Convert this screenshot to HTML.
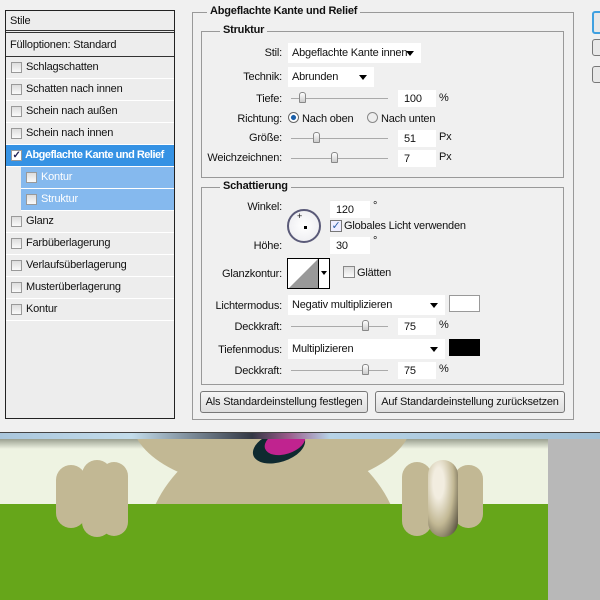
<!DOCTYPE html>
<html><head><meta charset="utf-8">
<style>
*{margin:0;padding:0;box-sizing:border-box}
body{width:600px;height:600px;overflow:hidden;background:#f0f0f0;font-family:"Liberation Sans",sans-serif;font-size:11px;letter-spacing:-0.2px;color:#111;position:relative}
.a{position:absolute;white-space:nowrap}
.list{left:5px;top:10px;width:170px;height:409px;border:1px solid #222;background:#ededed;overflow:hidden}
.row{position:absolute;left:0;width:168px;height:22px;line-height:21px;border-bottom:1px solid #fff;padding-left:20px}
.cb{position:absolute;width:11px;height:11px;border:1px solid #999;background:linear-gradient(#ddd,#fafafa);top:5px;left:5px}
.sel{background:#3592e4;color:#fff;font-weight:bold;letter-spacing:-0.5px;padding-left:19px}
.sub{background:#85b9ee;color:#fff;left:15px;width:153px}
.box{position:absolute;border:1px solid #999;}
.lbl{position:absolute;background:#f0f0f0;font-weight:bold;padding:0 3px;top:-8px}
.inp{position:absolute;background:#fff;height:17px;line-height:18px;padding-left:6px}
.dd{position:absolute;background:#fff;height:20px;line-height:20px;padding-left:4px;overflow:hidden}
.dd:after{content:"";position:absolute;right:7px;top:8px;border:4px solid transparent;border-top:5px solid #000}
.sl{position:absolute;height:1px;background:#aaa}
.th{position:absolute;width:7px;height:11px;border:1px solid #888;border-radius:3px 3px 1px 1px;background:linear-gradient(#fff,#ccc);top:-6px}
.r{text-align:right}
.btn{position:absolute;height:22px;border:1px solid #777;border-radius:3px;background:linear-gradient(#f6f6f6,#ddd);text-align:center;line-height:20px}
.cv{position:absolute;left:0;top:432px;width:600px;height:168px;overflow:hidden;background:#eef3e2}
.cv div{position:absolute}
</style></head><body>
<div class="a list">
 <div class="row" style="top:0;padding-left:4px;height:22px;border-bottom:3px double #333">Stile</div>
 <div class="row" style="top:24px;padding-left:4px;border-bottom:1px solid #333">Fülloptionen: Standard</div>
 <div class="row" style="top:46px"><span class="cb"></span>Schlagschatten</div>
 <div class="row" style="top:68px"><span class="cb"></span>Schatten nach innen</div>
 <div class="row" style="top:90px"><span class="cb"></span>Schein nach außen</div>
 <div class="row" style="top:112px"><span class="cb"></span>Schein nach innen</div>
 <div class="row sel" style="top:134px"><span class="cb" style="background:#fff;font-size:10px;line-height:9px;color:#225;text-align:center">✓</span>Abgeflachte Kante und Relief</div>
 <div class="row sub" style="top:156px"><span class="cb"></span>Kontur</div>
 <div class="row sub" style="top:178px"><span class="cb"></span>Struktur</div>
 <div class="row" style="top:200px"><span class="cb"></span>Glanz</div>
 <div class="row" style="top:222px"><span class="cb"></span>Farbüberlagerung</div>
 <div class="row" style="top:244px"><span class="cb"></span>Verlaufsüberlagerung</div>
 <div class="row" style="top:266px"><span class="cb"></span>Musterüberlagerung</div>
 <div class="row" style="top:288px"><span class="cb"></span>Kontur</div>
</div>

<div class="box" style="left:192px;top:12px;width:382px;height:408px"><span class="lbl" style="left:14px">Abgeflachte Kante und Relief</span></div>
<div class="box" style="left:201px;top:31px;width:363px;height:147px"><span class="lbl" style="left:18px">Struktur</span></div>
<div class="box" style="left:201px;top:187px;width:363px;height:198px"><span class="lbl" style="left:18px">Schattierung</span></div>

<div class="a r" style="left:200px;width:82px;top:47px">Stil:</div>
<div class="dd" style="left:288px;top:43px;width:133px">Abgeflachte Kante innen</div>
<div class="a r" style="left:200px;width:82px;top:71px">Technik:</div>
<div class="dd" style="left:288px;top:67px;width:86px">Abrunden</div>
<div class="a r" style="left:200px;width:82px;top:93px">Tiefe:</div>
<div class="sl" style="left:291px;top:98px;width:97px"><div class="th" style="left:8px"></div></div>
<div class="inp" style="left:398px;top:90px;width:38px">100</div><div class="a" style="left:439px;top:92px">%</div>
<div class="a r" style="left:200px;width:82px;top:113px">Richtung:</div>
<div class="a" style="left:288px;top:112px;width:11px;height:11px;border-radius:50%;border:1px solid #666;background:radial-gradient(#1a5ea8 35%,#fff 45%)"></div>
<div class="a" style="left:302px;top:113px">Nach oben</div>
<div class="a" style="left:367px;top:112px;width:11px;height:11px;border-radius:50%;border:1px solid #888;background:#eee"></div>
<div class="a" style="left:381px;top:113px">Nach unten</div>
<div class="a r" style="left:200px;width:82px;top:132px">Größe:</div>
<div class="sl" style="left:291px;top:138px;width:97px"><div class="th" style="left:22px"></div></div>
<div class="inp" style="left:398px;top:130px;width:38px">51</div><div class="a" style="left:439px;top:131px">Px</div>
<div class="a r" style="left:200px;width:82px;top:152px">Weichzeichnen:</div>
<div class="sl" style="left:291px;top:158px;width:97px"><div class="th" style="left:40px"></div></div>
<div class="inp" style="left:398px;top:150px;width:38px">7</div><div class="a" style="left:439px;top:151px">Px</div>

<div class="a r" style="left:200px;width:82px;top:201px">Winkel:</div>
<div class="a" style="left:287px;top:209px;width:34px;height:34px;border-radius:50%;border:2px solid #5a5a78;background:radial-gradient(#fff,#eaeaee)"></div>
<div class="a" style="left:297px;top:211px;font-size:9px">+</div>
<div class="a" style="left:304px;top:226px;width:3px;height:3px;background:#000"></div>
<div class="inp" style="left:330px;top:201px;width:40px">120</div><div class="a" style="left:373px;top:200px">°</div>
<div class="a" style="left:330px;top:220px;width:12px;height:12px;border:1px solid #777;background:#eef;color:#2d5fa8;font-size:11px;line-height:10px;text-align:center">✓</div>
<div class="a" style="left:344px;top:220px">Globales Licht verwenden</div>
<div class="a r" style="left:200px;width:82px;top:240px">Höhe:</div>
<div class="inp" style="left:330px;top:237px;width:40px">30</div><div class="a" style="left:373px;top:235px">°</div>
<div class="a r" style="left:200px;width:82px;top:268px">Glanzkontur:</div>
<div class="a" style="left:287px;top:258px;width:43px;height:31px;border:1px solid #000;background:#fff">
<svg width="31" height="29" style="position:absolute;left:1px;top:0"><polygon points="0,29 29,0 29,29" fill="#999"/></svg>
<div style="position:absolute;left:30px;top:0;width:1px;height:29px;background:#000"></div>
<div style="position:absolute;left:33px;top:12px;border:3px solid transparent;border-top:4px solid #000"></div></div>
<div class="a" style="left:343px;top:266px;width:12px;height:12px;border:1px solid #888;background:linear-gradient(#ddd,#fafafa)"></div>
<div class="a" style="left:357px;top:267px">Glätten</div>
<div class="a r" style="left:200px;width:82px;top:300px">Lichtermodus:</div>
<div class="dd" style="left:288px;top:295px;width:157px">Negativ multiplizieren</div>
<div class="a" style="left:449px;top:295px;width:31px;height:17px;background:#fff;border:1px solid #999"></div>
<div class="a r" style="left:200px;width:82px;top:321px">Deckkraft:</div>
<div class="sl" style="left:291px;top:326px;width:97px"><div class="th" style="left:71px"></div></div>
<div class="inp" style="left:398px;top:318px;width:38px">75</div><div class="a" style="left:439px;top:319px">%</div>
<div class="a r" style="left:200px;width:82px;top:344px">Tiefenmodus:</div>
<div class="dd" style="left:288px;top:339px;width:157px">Multiplizieren</div>
<div class="a" style="left:449px;top:339px;width:31px;height:17px;background:#000"></div>
<div class="a r" style="left:200px;width:82px;top:365px">Deckkraft:</div>
<div class="sl" style="left:291px;top:370px;width:97px"><div class="th" style="left:71px"></div></div>
<div class="inp" style="left:398px;top:362px;width:38px">75</div><div class="a" style="left:439px;top:363px">%</div>

<div class="btn" style="left:200px;top:391px;width:168px">Als Standardeinstellung festlegen</div>
<div class="btn" style="left:375px;top:391px;width:190px">Auf Standardeinstellung zurücksetzen</div>

<div class="a" style="left:592px;top:11px;width:20px;height:23px;border:2px solid #3fa0e0;border-radius:3px;background:#e8e8e8"></div>
<div class="a" style="left:592px;top:39px;width:20px;height:17px;border:1px solid #777;border-radius:3px;background:#e8e8e8"></div>
<div class="a" style="left:592px;top:66px;width:20px;height:17px;border:1px solid #777;border-radius:3px;background:#e8e8e8"></div>

<div class="cv">
 <div style="left:0;top:7px;width:548px;height:10px;background:linear-gradient(#9aa090,#eef3e2)"></div>
 <div style="left:132px;top:-82px;width:280px;height:140px;border-radius:50%;background:#c2b894"></div>
 <div style="left:143px;top:-2px;width:260px;height:260px;border-radius:50%;background:#c2b894"></div>
 <div style="left:252px;top:0px;width:54px;height:30px;border-radius:50%;background:#0f2a30;transform:rotate(-18deg)"></div>
 <div style="left:264px;top:-2px;width:42px;height:24px;border-radius:50%;background:#c0238f;transform:rotate(-18deg)"></div>
 <div style="left:0;top:0;width:600px;height:7px;background:linear-gradient(90deg,#a9c6dc,#c3dcea 22%,#333844 42%,#9a5a8a 48%,#b7d3e6 55%,#a0bfd5);border-top:1px solid #444"></div>
 <div style="left:0;top:72px;width:548px;height:96px;background:#66a61a"></div>
 <div style="left:548px;top:7px;width:52px;height:161px;background:#b8b8b8"></div>
 <div style="left:56px;top:33px;width:30px;height:63px;border-radius:15px;background:#c2b894"></div>
 <div style="left:82px;top:28px;width:30px;height:77px;border-radius:15px;background:#c2b894"></div>
 <div style="left:100px;top:30px;width:28px;height:74px;border-radius:14px;background:#c2b894"></div>
 <div style="left:402px;top:30px;width:30px;height:74px;border-radius:15px;background:#c2b894"></div>
 <div style="left:454px;top:33px;width:29px;height:63px;border-radius:14px;background:#c2b894"></div>
 <div style="left:428px;top:28px;width:30px;height:77px;border-radius:15px;background:radial-gradient(ellipse at 35% 30%,#f2ede0 20%,#c2b894 55%,#3a3428 100%)"></div>
</div>
</body></html>
